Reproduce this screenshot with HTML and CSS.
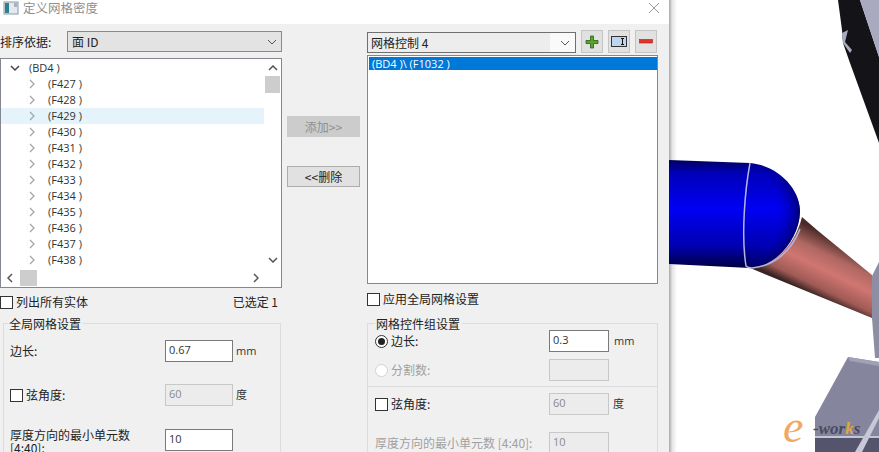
FILE: index.html
```html
<!DOCTYPE html>
<html lang="zh-CN">
<head>
<meta charset="utf-8">
<title>定义网格密度</title>
<link rel="stylesheet" href="styles.css">
</head>
<body>
<div class="app">
  <section class="dialog">
    <header class="titlebar">
      <div class="title-left">
        <svg class="app-icon" width="16" height="14" viewBox="0 0 16 14"><rect x="1" y="1" width="14" height="12" fill="#e4e9ee" stroke="#8b98a6"/><rect x="2" y="2" width="4" height="10" fill="#2f7f8f"/><rect x="11" y="2" width="3" height="4" fill="#9fb4c6"/></svg>
        <span class="title-text">定义网格密度</span>
      </div>
      <svg class="close" width="12" height="12" viewBox="0 0 12 12"><path d="M1 1L11 11M11 1L1 11" stroke="#9a9a9a" fill="none"/></svg>
    </header>
    <div class="content">
      <div class="col-left">
        <div class="sort-row">
          <span class="lbl">排序依据:</span>
          <div class="combo combo-sort"><span>面 ID</span><svg width="10" height="6" viewBox="0 0 10 6"><path d="M1 1L5 5L9 1" stroke="#555" fill="none"/></svg></div>
        </div>
        <div class="tree">
          <div class="tree-main">
            <div class="tree-rows">
              <div class="row root"><svg class="chev" width="10" height="7" viewBox="0 0 10 7"><path d="M1 1L5 5L9 1" stroke="#444" stroke-width="1.5" fill="none"/></svg><span>(BD4 )</span></div>
              <div class="row"><svg class="chev" width="6" height="10" viewBox="0 0 6 10"><path d="M1 1L5 5L1 9" stroke="#a6a6a6" stroke-width="1.3" fill="none"/></svg><span>(F427 )</span></div>
              <div class="row"><svg class="chev" width="6" height="10" viewBox="0 0 6 10"><path d="M1 1L5 5L1 9" stroke="#a6a6a6" stroke-width="1.3" fill="none"/></svg><span>(F428 )</span></div>
              <div class="row hover"><svg class="chev" width="6" height="10" viewBox="0 0 6 10"><path d="M1 1L5 5L1 9" stroke="#a6a6a6" stroke-width="1.3" fill="none"/></svg><span>(F429 )</span></div>
              <div class="row"><svg class="chev" width="6" height="10" viewBox="0 0 6 10"><path d="M1 1L5 5L1 9" stroke="#a6a6a6" stroke-width="1.3" fill="none"/></svg><span>(F430 )</span></div>
              <div class="row"><svg class="chev" width="6" height="10" viewBox="0 0 6 10"><path d="M1 1L5 5L1 9" stroke="#a6a6a6" stroke-width="1.3" fill="none"/></svg><span>(F431 )</span></div>
              <div class="row"><svg class="chev" width="6" height="10" viewBox="0 0 6 10"><path d="M1 1L5 5L1 9" stroke="#a6a6a6" stroke-width="1.3" fill="none"/></svg><span>(F432 )</span></div>
              <div class="row"><svg class="chev" width="6" height="10" viewBox="0 0 6 10"><path d="M1 1L5 5L1 9" stroke="#a6a6a6" stroke-width="1.3" fill="none"/></svg><span>(F433 )</span></div>
              <div class="row"><svg class="chev" width="6" height="10" viewBox="0 0 6 10"><path d="M1 1L5 5L1 9" stroke="#a6a6a6" stroke-width="1.3" fill="none"/></svg><span>(F434 )</span></div>
              <div class="row"><svg class="chev" width="6" height="10" viewBox="0 0 6 10"><path d="M1 1L5 5L1 9" stroke="#a6a6a6" stroke-width="1.3" fill="none"/></svg><span>(F435 )</span></div>
              <div class="row"><svg class="chev" width="6" height="10" viewBox="0 0 6 10"><path d="M1 1L5 5L1 9" stroke="#a6a6a6" stroke-width="1.3" fill="none"/></svg><span>(F436 )</span></div>
              <div class="row"><svg class="chev" width="6" height="10" viewBox="0 0 6 10"><path d="M1 1L5 5L1 9" stroke="#a6a6a6" stroke-width="1.3" fill="none"/></svg><span>(F437 )</span></div>
              <div class="row"><svg class="chev" width="6" height="10" viewBox="0 0 6 10"><path d="M1 1L5 5L1 9" stroke="#a6a6a6" stroke-width="1.3" fill="none"/></svg><span>(F438 )</span></div>
            </div>
            <div class="vscroll">
              <svg width="10" height="6" viewBox="0 0 10 6"><path d="M1 5L5 1L9 5" stroke="#555" stroke-width="1.5" fill="none"/></svg>
              <div class="vthumb"></div>
              <svg class="v-down" width="10" height="6" viewBox="0 0 10 6"><path d="M1 1L5 5L9 1" stroke="#555" stroke-width="1.5" fill="none"/></svg>
            </div>
          </div>
          <div class="hscroll">
            <svg width="6" height="10" viewBox="0 0 6 10"><path d="M5 1L1 5L5 9" stroke="#555" stroke-width="1.5" fill="none"/></svg>
            <div class="hthumb"></div>
            <svg class="h-right" width="6" height="10" viewBox="0 0 6 10"><path d="M1 1L5 5L1 9" stroke="#555" stroke-width="1.5" fill="none"/></svg>
          </div>
        </div>
        <div class="check-row">
          <label class="check-label"><span class="box"></span><span class="lbl">列出所有实体</span></label>
          <span class="lbl selected">已选定 1</span>
        </div>
        <div class="group group-global">
          <span class="legend">全局网格设置</span>
          <div class="form-row r-edge">
            <span class="lbl">边长:</span>
            <div class="field">0.67</div>
            <span class="unit">mm</span>
          </div>
          <div class="form-row r-chord">
            <span class="box"></span><span class="lbl lbl-box">弦角度:</span>
            <div class="field off">60</div>
            <span class="lbl unit">度</span>
          </div>
          <div class="form-row r-thick">
            <span class="lbl thick">厚度方向的最小单元数<br>[4:40]:</span>
            <div class="field">10</div>
          </div>
        </div>
      </div>
      <div class="col-mid">
        <div class="btn off">添加&gt;&gt;</div>
        <div class="btn">&lt;&lt;删除</div>
      </div>
      <div class="col-right">
        <div class="control-row">
          <div class="combo combo-mesh"><span class="mesh-name">网格控制 4</span><svg width="10" height="6" viewBox="0 0 10 6"><path d="M1 1L5 5L9 1" stroke="#555" fill="none"/></svg></div>
          <div class="tool first"><svg width="14" height="14" viewBox="0 0 14 14"><path d="M5.5 1h3v4.500h4.500v3h-4.500v4.500h-3v-4.500h-4.500v-3h4.500z" fill="#58a32a" stroke="#2c5e14" stroke-width=".8"/></svg></div>
          <div class="tool"><svg width="16" height="11" viewBox="0 0 16 11"><rect x=".5" y=".5" width="15" height="10" fill="#bcd6ee" stroke="#333"/><path d="M10 2.500h3M10 8.500h3M11.500 2.500v6" stroke="#111" fill="none"/></svg></div>
          <div class="tool"><svg width="14" height="5" viewBox="0 0 14 5"><rect x=".5" y=".5" width="13" height="3.500" fill="#e0352b" stroke="#a32018" stroke-width=".6"/></svg></div>
        </div>
        <div class="list">
          <div class="list-sel">(BD4 )\ (F1032 )</div>
        </div>
        <label class="check-label apply"><span class="box"></span><span class="lbl">应用全局网格设置</span></label>
        <div class="group group-mesh">
          <span class="legend">网格控件组设置</span>
          <div class="form-row m-edge">
            <span class="radio on"></span><span class="lbl lbl-box">边长:</span>
            <div class="field">0.3</div>
            <span class="unit">mm</span>
          </div>
          <div class="form-row m-div">
            <span class="radio dis"></span><span class="lbl lbl-box grey">分割数:</span>
            <div class="field off"></div>
          </div>
          <div class="divider"></div>
          <div class="form-row m-chord">
            <span class="box"></span><span class="lbl lbl-box">弦角度:</span>
            <div class="field off">60</div>
            <span class="lbl unit">度</span>
          </div>
          <div class="form-row m-thick">
            <span class="lbl grey">厚度方向的最小单元数 [4:40]:</span>
            <div class="field off">10</div>
          </div>
        </div>
      </div>
    </div>
  </section>
  <div class="viewport">
    <svg class="scene" width="210" height="452" viewBox="669 0 210 452">
      <defs>
        <linearGradient id="blue" x1="0" y1="0" x2="0" y2="1"><stop offset="0" stop-color="#000060"/><stop offset=".12" stop-color="#0000b8"/><stop offset=".45" stop-color="#0000f4"/><stop offset=".8" stop-color="#0000b0"/><stop offset="1" stop-color="#000040"/></linearGradient>
        <radialGradient id="cap" gradientUnits="userSpaceOnUse" cx="735" cy="212" r="66"><stop offset=".6" stop-color="#0000f0" stop-opacity="0"/><stop offset="1" stop-color="#000050" stop-opacity=".85"/></radialGradient>
        <linearGradient id="cone" gradientUnits="userSpaceOnUse" x1="838" y1="240" x2="812" y2="294"><stop offset="0" stop-color="#4a2a28"/><stop offset=".3" stop-color="#b06862"/><stop offset=".55" stop-color="#d07672"/><stop offset=".85" stop-color="#a05a56"/><stop offset="1" stop-color="#3a2422"/></linearGradient>
        <linearGradient id="shadow" x1="0" y1="0" x2="1" y2="0"><stop offset="0" stop-color="#a8a8a8"/><stop offset=".4" stop-color="#e4e4e4"/><stop offset="1" stop-color="#fff"/></linearGradient>
      </defs>
      <rect x="669" y="0" width="8" height="452" fill="url(#shadow)"/>
      <path d="M802 217L817 230L872 275V318L750 268C775 266 795 245 802 217Z" fill="url(#cone)"/>
      <path d="M669 160L750 163C780 166 800 190 800 212C799 240 775 267 750 268L669 264Z" fill="url(#blue)"/>
      <path d="M745 163C780 166 800 190 800 212C799 240 775 267 750 268Z" fill="url(#cap)"/>
      <path d="M750 163C745 190 741 235 746 266C748 268 750 268 752 268C775 266 792 250 800 229" stroke="#b4b4e0" stroke-width="1.500" fill="none"/>
      <path d="M838 0H860L879 57V143L850 63L843 43L842 30Z" fill="#141418"/>
      <path d="M860 0H879V57Z" fill="#a9a9bf"/>
      <path d="M842 33L848 30L845 42L852 50L850 53L843 43Z" fill="#a9a9bf"/>
      <path d="M872 276L879 262V358H875L872 318Z" fill="#8d8da4"/>
      <path d="M848 357L879 362V452H815V417Z" fill="#85859e"/>
      <path d="M848 357L879 362V366L850 361Z" fill="#a0a0b8"/>
      <path d="M815 437H879V452H815Z" fill="#54546c"/>
      <path d="M855 452L879 410V418L862 452Z" fill="#c8c8d8"/>
      <rect x="815" y="436" width="64" height="2" fill="#c0c8d8"/>
      <text class="logo-e" x="783" y="442">e</text>
      <text class="logo-works" x="813" y="434">-wor<tspan class="logo-k">k</tspan>s</text>
    </svg>
  </div>
</div>
</body>
</html>
```
FILE: styles.css
```css
* { box-sizing: border-box; }
html, body { margin: 0; padding: 0; background: #fff; }
body { width: 879px; height: 452px; overflow: hidden; font-family: "Noto Sans CJK SC", "Noto Sans", sans-serif; font-size: 12px; color: #222; }
.app { display: flex; height: 452px; }
.dialog { width: 669px; flex: none; height: 452px; background: #f0f0f0; overflow: hidden; }
.viewport { flex: 1; background: #fff; overflow: hidden; }
.scene { display: block; }
.logo-e { font-family: "Liberation Serif", serif; font-style: italic; font-size: 46px; fill: #f2a860; }
.logo-works { font-family: "Liberation Serif", serif; font-style: italic; font-weight: bold; font-size: 17px; fill: #4a4a5e; }
.logo-k { fill: #e0a838; }

.titlebar { height: 24px; background: #fff; display: flex; align-items: center; justify-content: space-between; padding: 0 9px 8px 3px; height: 24px; }
.title-left { display: flex; align-items: center; gap: 4px; }
.app-icon { display: block; }
.title-text { font-size: 12.500px; color: #8f8f8f; line-height: 16px; }
.close { display: block; margin-top: 0; }

.content { display: flex; height: 428px; }
.col-left { width: 282px; flex: none; }
.col-mid { width: 73px; flex: none; margin: 0 7px 0 5px; padding-top: 92px; }
.col-right { width: 292px; flex: none; }

.lbl { font-size: 12px; line-height: 16px; white-space: nowrap; color: #222; }
.grey { color: #a0a0a0; }
.unit { font-family: "Open Sans", sans-serif; font-size: 11px; line-height: 16px; color: #333; }

.sort-row { display: flex; align-items: center; justify-content: space-between; height: 21px; margin-top: 7px; }
.combo { display: flex; align-items: center; justify-content: space-between; border: 1px solid #8a8a8a; height: 21px; background: #e3e3e3; padding: 0 4px 0 4px; font-size: 12px; }
.combo-sort { width: 215px; padding-left: 4px; }
.combo-sort span { font-size: 12px; }

.tree { margin-top: 6px; height: 230px; border: 1px solid #828790; background: #fff; display: flex; flex-direction: column; }
.tree-main { display: flex; flex: 1; min-height: 0; }
.tree-rows { flex: 1; padding-top: 1px; overflow: hidden; font-family: "Open Sans", sans-serif; font-size: 11px; }
.row { height: 16px; display: flex; align-items: center; padding-left: 28px; position: relative; color: #333; white-space: nowrap; margin-right: 0; line-height: 16px; }
.row.root { padding-left: 9px; }
.row.root span { margin-left: 9px; }
.row span { margin-left: 13px; }
.row .chev { flex: none; }
.row.hover { background: #e5f3fb; }
.vscroll { width: 17px; flex: none; display: flex; flex-direction: column; align-items: center; padding-top: 6px; background: #fff; }
.vthumb { width: 15px; height: 17px; margin-top: 5px; background: #cdcdcd; }
.v-down { margin-top: auto; margin-bottom: 5px; }
.hscroll { height: 19px; flex: none; display: flex; align-items: center; padding-left: 6px; padding-right: 22px; }
.hthumb { width: 17px; height: 16px; margin-left: 7px; background: #cdcdcd; }
.h-right { margin-left: auto; }

.check-row { display: flex; justify-content: space-between; align-items: center; height: 16px; margin-top: 6px; padding-right: 4px; }
.check-label { display: flex; align-items: center; }
.box { display: block; width: 13px; height: 13px; border: 1px solid #333; background: #fff; flex: none; }
.lbl-box { margin-left: 3px; }
.check-label .lbl { margin-left: 3px; }
.selected { font-size: 12px; }

.group { position: relative; border: 1px solid #dcdcdc; }
.legend { position: absolute; top: -8px; left: 4px; padding: 0 2px 0 1px; background: #f0f0f0; font-size: 12px; line-height: 16px; white-space: nowrap; }
.group-global { margin-top: 13px; margin-left: 3px; width: 278px; height: 140px; padding: 0 6px; }
.form-row { display: flex; align-items: center; }
.field { width: 68px; height: 22px; border: 1px solid #7a7a7a; background: #fff; font-family: "Open Sans", sans-serif; font-size: 11px; line-height: 18px; padding: 0 3px; color: #333; flex: none; }
.field.off { background: #ececec; border-color: #c8c8c8; color: #8a8a8a; }
.r-edge { margin-top: 16px; }
.r-edge .lbl { width: 155px; }
.r-edge .unit, .r-chord .unit { margin-left: 3px; }
.r-chord { margin-top: 22px; }
.r-chord .lbl-box { width: 139px; }
.r-thick { margin-top: 23px; align-items: flex-start; }
.thick { width: 155px; line-height: 13px; margin-top: -1px; display: block; }
.m-edge { margin-top: 6px; }

.btn { width: 73px; height: 21px; border: 1px solid #adadad; background: #e1e1e1; font-size: 12px; display: flex; align-items: center; justify-content: center; color: #222; }
.btn.off { background: #cccccc; border-color: #cccccc; color: #909090; margin-bottom: 29px; }

.control-row { display: flex; align-items: flex-start; margin-top: 6px; height: 25px; }
.combo-mesh { width: 209px; height: 21px; margin-top: 2px; border-color: #6f6f6f; background: linear-gradient(to right, #ededed 88%, #fafafa 88%); padding-left: 3px; padding-right: 5px; }
.mesh-name { font-size: 12px; }
.tool { width: 22px; height: 23px; margin-left: 5px; border: 1px solid #c4c4c4; background: #e1e1e1; display: flex; align-items: center; justify-content: center; }
.tool.first { margin-left: 5px; }
.list { width: 291px; height: 229px; margin-top: 0; border: 1px solid #828790; background: #fff; padding: 1px; }
.list-sel { height: 13px; background: #0078d7; color: #fff; font-family: "Open Sans", sans-serif; font-size: 11px; line-height: 13px; padding-left: 3px; width: 288px; white-space: nowrap; }
.apply { height: 16px; margin-top: 7px; }
.group-mesh { margin-top: 16px; width: 291px; height: 140px; }
.group-mesh .legend { left: 7px; }
.m-edge, .m-div, .m-chord, .m-thick { padding-left: 7px; }
.radio { display: block; width: 13px; height: 13px; border-radius: 50%; border: 1px solid #333; background: #fff; flex: none; position: relative; }
.radio.on::after { content: ""; position: absolute; left: 2px; top: 2px; width: 7px; height: 7px; border-radius: 50%; background: #222; }
.radio.dis { border-color: #d2d2d2; }
.group-mesh .field { width: 60px; }
.m-edge .lbl-box, .m-div .lbl-box, .m-chord .lbl-box { width: 158px; }
.m-edge .unit { margin-left: 5px; }
.m-chord .unit { margin-left: 4px; }
.m-div { margin-top: 7px; }
.divider { height: 1px; background: #dcdcdc; margin-top: 5px; }
.m-chord { margin-top: 6px; }
.m-thick { margin-top: 17px; }
.m-thick .lbl { width: 174px; }
```
